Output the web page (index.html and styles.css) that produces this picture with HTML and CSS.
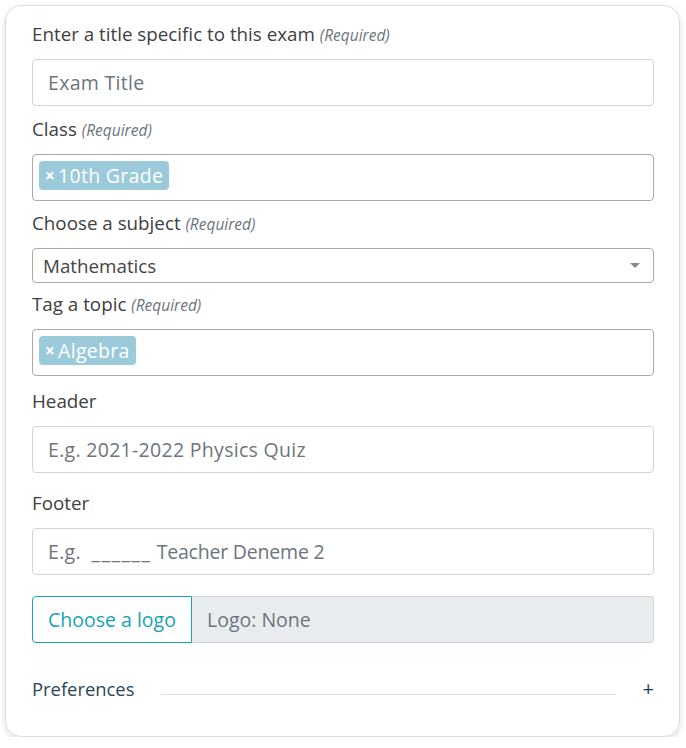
FILE: index.html
```html
<!DOCTYPE html>
<html>
<head>
<meta charset="utf-8">
<link rel="stylesheet" href="styles.css">
</head>
<body>
<div class="card">
  <div class="field f1">
    <div class="label">Enter a title specific to this exam <span class="req">(Required)</span></div>
    <div class="input"><span class="ph">Exam Title</span></div>
  </div>
  <div class="field f2">
    <div class="label">Class <span class="req">(Required)</span></div>
    <div class="multi"><span class="tag"><span class="x">×</span>10th Grade</span></div>
  </div>
  <div class="field f3">
    <div class="label">Choose a subject <span class="req">(Required)</span></div>
    <div class="select"><span class="val">Mathematics</span><span class="arrow"></span></div>
  </div>
  <div class="field f4">
    <div class="label">Tag a topic <span class="req">(Required)</span></div>
    <div class="multi"><span class="tag"><span class="x">×</span>Algebra</span></div>
  </div>
  <div class="field f5">
    <div class="label">Header</div>
    <div class="input"><span class="ph">E.g. 2021-2022 Physics Quiz</span></div>
  </div>
  <div class="field f6">
    <div class="label">Footer</div>
    <div class="input"><span class="ph">E.g.&nbsp; <span class="blank">______</span> <span class="tight">Teacher Deneme 2</span></span></div>
  </div>
  <div class="logo-row">
    <div class="logo-btn">Choose a logo</div>
    <div class="logo-info">Logo: None</div>
  </div>
  <div class="prefs">
    <span class="prefs-title">Preferences</span>
    <span class="prefs-line"></span>
    <span class="prefs-plus">+</span>
  </div>
</div>
</body>
</html>
```
FILE: styles.css
```css
* { box-sizing: border-box; }
html, body { margin: 0; padding: 0; background: #fff; }
body {
  font-family: "Open Sans", "Noto Sans", sans-serif;
  color: #404040;
  padding: 5px 6px 0 5px;
}
.card {
  width: 675px;
  height: 732px;
  border: 1px solid #dcdcdc;
  border-radius: 16px;
  box-shadow: 0 3px 6px rgba(0,0,0,0.12);
  padding: 15px 25px 0 26px;
  display: flex;
  flex-direction: column;
}
.field { display: flex; flex-direction: column; }
.label {
  font-size: 18.8px;
  line-height: 26px;
  height: 26px;
  margin-bottom: 12px;
  white-space: nowrap;
}
.req {
  font-size: 15.5px;
  font-style: italic;
  color: #6c757d;
}
.f2 { margin-top: 10px; }
.f3 { margin-top: 9px; }
.f4 { margin-top: 8px; }
.f5 { margin-top: 12px; }
.f6 { margin-top: 17px; }
.input {
  height: 47px;
  border: 1px solid #ced4da;
  border-radius: 4px;
  padding: 0 15px;
  display: flex;
  align-items: center;
  font-size: 19.5px;
  letter-spacing: 0.3px;
}
.ph { color: #6c757d; }
.blank { letter-spacing: 1.4px; }
.tight { letter-spacing: -0.2px; }
.multi {
  height: 47px;
  border: 1px solid #aaa;
  border-radius: 4px;
  padding: 6px 6px;
  display: flex;
  align-items: flex-start;
}
.tag {
  background: #9bcadb;
  color: #fff;
  border-radius: 4px;
  height: 29px;
  padding: 0 6px 0 6px;
  font-size: 19.5px;
  letter-spacing: 0.3px;
  line-height: 29px;
  display: inline-flex;
  align-items: center;
}
.x { font-weight: 700; font-size: 17px; margin-right: 3px; }
.select {
  height: 35px;
  border: 1px solid #aaa;
  border-radius: 4px;
  padding: 0 10px;
  display: flex;
  align-items: center;
  justify-content: space-between;
  font-size: 18.8px;
  color: #444;
}
.arrow {
  width: 0; height: 0;
  border-left: 5px solid transparent;
  border-right: 5px solid transparent;
  border-top: 5px solid #888;
  margin-right: 3px;
}
.logo-row {
  margin-top: 21px;
  display: flex;
  height: 47px;
  font-size: 19.5px;
}
.logo-btn {
  width: 160px;
  border: 1px solid #17a2b8;
  border-radius: 4px 0 0 4px;
  color: #17a2b8;
  display: flex;
  align-items: center;
  padding-left: 15px;
}
.logo-info {
  flex: 1;
  background: #e9ecef;
  border: 1px solid #ced4da;
  border-left: none;
  border-radius: 0 4px 4px 0;
  color: #6c757d;
  display: flex;
  align-items: center;
  padding-left: 15px;
}
.prefs {
  margin-top: 32px;
  display: flex;
  align-items: center;
  height: 26px;
  font-size: 18.4px;
  color: #2a4657;
}
.prefs-title { width: 129px; }
.prefs-line {
  width: 456px;
  height: 1px;
  background: #dde0e3;
  margin-top: 12px;
}
.prefs-plus { margin-left: 27px; font-size: 20px; font-weight: 400; color: #1f3d4d; }
```
